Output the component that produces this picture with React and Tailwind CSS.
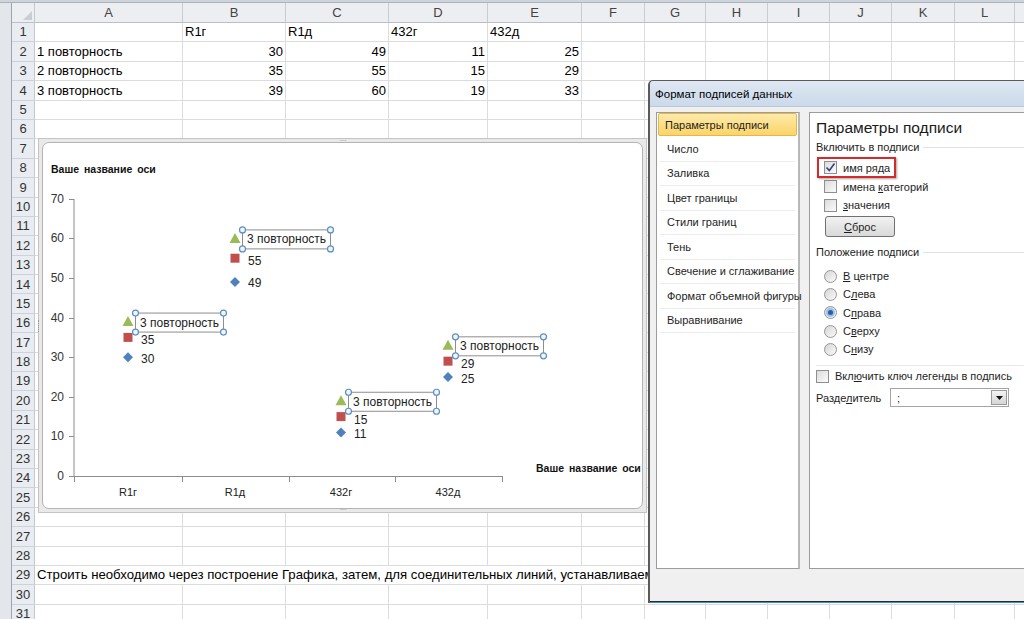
import React from 'react';

const COLS = [
  ['A', 148], ['B', 103], ['C', 103], ['D', 99], ['E', 94], ['F', 63], ['G', 61],
  ['H', 62], ['I', 62], ['J', 62], ['K', 63], ['L', 60], ['M', 40],
];

const DATA = {
  1: [null, { t: 'R1г' }, { t: 'R1д' }, { t: '432г' }, { t: '432д' }],
  2: [{ t: '1 повторность' }, { t: '30', r: 1 }, { t: '49', r: 1 }, { t: '11', r: 1 }, { t: '25', r: 1 }],
  3: [{ t: '2 повторность' }, { t: '35', r: 1 }, { t: '55', r: 1 }, { t: '15', r: 1 }, { t: '29', r: 1 }],
  4: [{ t: '3 повторность' }, { t: '39', r: 1 }, { t: '60', r: 1 }, { t: '19', r: 1 }, { t: '33', r: 1 }],
};

const ROWS = Array.from({ length: 31 }, (_, i) => i + 1);

function Sheet() {
  return (
    <div className="flex flex-col">
      <div className="h-[3px] bg-[#cfd4da] border-b border-[#aab2bc]" />
      <div className="flex">
        <div className="w-[12px] bg-[#e3e7ec] border-r border-[#9aa5b1] flex-shrink-0" />
        <div className="flex flex-col">
          {/* column headers */}
          <div className="flex h-[20px] bg-[#eceef1] border-b border-[#b9c0c9]">
            <div className="w-[23px] flex-shrink-0 border-r border-[#c3c9d1] relative">
              <div className="absolute right-[2px] bottom-[2px] w-0 h-0 border-l-[9px] border-l-transparent border-b-[9px] border-b-[#c9ced5]" />
            </div>
            {COLS.map(([l, w]) => (
              <div key={l} style={{ width: w }} className="flex-shrink-0 border-r border-[#c8cdd4] flex items-center justify-center text-[13px] text-[#444]">
                {l}
              </div>
            ))}
          </div>
          {ROWS.map((r) => (
            <div key={r} className="flex h-[19.4px] border-b border-[#dadcdd]">
              <div className="w-[23px] flex-shrink-0 bg-[#e9ecf0] border-r border-[#c3c9d1] border-b border-b-[#cdd2d8] -mb-px flex items-center justify-center text-[13px] text-[#333]">
                {r}
              </div>
              {r === 29 ? (
                <div className="flex-1 pl-[2px] flex items-center whitespace-nowrap text-[13.2px] text-black">
                  Строить необходимо через построение Графика, затем, для соединительных линий, устанавливаем тип линии «нет»
                </div>
              ) : (
                COLS.map(([l, w], ci) => {
                  const c = DATA[r] && DATA[r][ci];
                  return (
                    <div key={l} style={{ width: w }} className={`flex-shrink-0 border-r border-[#dadcdd] flex items-center px-[2px] text-[13px] text-black ${c && c.r ? 'justify-end' : ''}`}>
                      {c ? c.t : ''}
                    </div>
                  );
                })
              )}
            </div>
          ))}
        </div>
      </div>
    </div>
  );
}

const yOf = (v) => 475 - v * 3.96;
const CATS = [
  { x: 127, l: 'R1г', v: [30, 35, 39] },
  { x: 234, l: 'R1д', v: [49, 55, 60] },
  { x: 340, l: '432г', v: [11, 15, 19] },
  { x: 447, l: '432д', v: [25, 29, 33] },
];

function Handle({ x, y }) {
  return <circle cx={x} cy={y} r="3" fill="#eef5fb" stroke="#5d8fbf" strokeWidth="1.2" />;
}

function Chart() {
  return (
    <div className="absolute left-[38px] top-[138px] w-[609px] h-[375px] bg-[#e9e9e9] border border-[#c4c4c4] p-[3px]">
      <div className="w-full h-full bg-white border border-[#b4b4b4] rounded-[7px] overflow-hidden">
        <svg width="601" height="365" className="block" style={{ fontFamily: '"Liberation Sans", Arial, sans-serif' }}>
          <g transform="translate(-42,-142)">
            <text x="50" y="172" fontSize="10.5" fontWeight="bold" fill="#111" wordSpacing="2">Ваше название оси</text>
            <text x="535" y="471" fontSize="10.5" fontWeight="bold" fill="#111" wordSpacing="2">Ваше название оси</text>
            <line x1="73" y1="198" x2="73" y2="476" stroke="#8c8c8c" strokeWidth="1" />
            <line x1="73" y1="475.5" x2="501" y2="475.5" stroke="#8c8c8c" strokeWidth="1" />
            {[0, 10, 20, 30, 40, 50, 60, 70].map((v) => (
              <g key={v}>
                <line x1="68" y1={Math.round(yOf(v)) + 0.5} x2="73" y2={Math.round(yOf(v)) + 0.5} stroke="#8c8c8c" />
                <text x="63" y={yOf(v) + 4} fontSize="12" fill="#333" textAnchor="end">{v}</text>
              </g>
            ))}
            {[73, 181, 288, 394, 501].map((x) => (
              <line key={x} x1={x + 0.5} y1="475" x2={x + 0.5} y2="481" stroke="#8c8c8c" />
            ))}
            {CATS.map((c) => {
              const yb = yOf(c.v[0]);
              const yr = yOf(c.v[1]);
              const yg = yOf(c.v[2]);
              const bx = c.x + 7;
              const by = yg - 9;
              return (
                <g key={c.l}>
                  <text x={c.x} y="495" fontSize="11" fill="#222" textAnchor="middle">{c.l}</text>
                  <polygon points={`${c.x},${yb - 5} ${c.x + 5},${yb} ${c.x},${yb + 5} ${c.x - 5},${yb}`} fill="#4f81bd" />
                  <rect x={c.x - 4.5} y={yr - 4.5} width="9" height="9" fill="#c0504d" />
                  <polygon points={`${c.x},${yg - 5.5} ${c.x + 5.5},${yg + 4.5} ${c.x - 5.5},${yg + 4.5}`} fill="#9bbb59" />
                  <text x={c.x + 13} y={yb + 5.5} fontSize="12" fill="#222">{c.v[0]}</text>
                  <text x={c.x + 13} y={yr + 7} fontSize="12" fill="#222">{c.v[1]}</text>
                  <rect x={bx + 0.5} y={by + 0.5} width="88" height="19" fill="white" stroke="#8d8d8d" />
                  <text x={bx + 5} y={by + 14} fontSize="12" fill="#222">3 повторность</text>
                  <Handle x={bx + 0.5} y={by + 0.5} />
                  <Handle x={bx + 88.5} y={by + 0.5} />
                  <Handle x={bx + 0.5} y={by + 19.5} />
                  <Handle x={bx + 88.5} y={by + 19.5} />
                </g>
              );
            })}
          </g>
        </svg>
      </div>
      <div className="absolute left-1/2 -translate-x-1/2 top-[-2px] text-[8px] leading-none text-[#9a9a9a] tracking-[-1px]">····</div>
      <div className="absolute left-1/2 -translate-x-1/2 bottom-[-2px] text-[8px] leading-none text-[#9a9a9a] tracking-[-1px]">····</div>
      <div className="absolute left-[-1px] top-1/2 -translate-y-1/2 w-[2px] h-[12px] border-l border-dotted border-[#9a9a9a]" />
    </div>
  );
}

function Check({ checked }) {
  return (
    <span className="w-[13px] h-[13px] flex-shrink-0 border border-[#8e8f8f] bg-gradient-to-br from-[#dcdcdc] to-[#fbfbfb] flex items-center justify-center">
      {checked && (
        <svg width="11" height="11" viewBox="0 0 11 11">
          <path d="M1.5 5.5 L4.3 8.5 L9.5 1.5" fill="none" stroke="#31457a" strokeWidth="1.6" />
        </svg>
      )}
    </span>
  );
}

function Radio({ on }) {
  return (
    <span className="w-[13px] h-[13px] flex-shrink-0 rounded-full border border-[#959595] bg-gradient-to-br from-[#d5d5d5] to-[#fbfbfb] flex items-center justify-center">
      {on && <span className="w-[5px] h-[5px] rounded-full bg-[#2a5ea8] ring-2 ring-[#9fc1e6]" />}
    </span>
  );
}

function Group({ title }) {
  return (
    <div className="flex items-center gap-[4px] h-[16px]">
      <span className="text-[#222]">{title}</span>
      <span className="flex-1 h-px bg-[#dde3e8]" />
    </div>
  );
}

const NAV = [
  'Параметры подписи', 'Число', 'Заливка', 'Цвет границы', 'Стили границ', 'Тень',
  'Свечение и сглаживание', 'Формат объемной фигуры', 'Выравнивание',
];

function Dialog() {
  return (
    <div className="absolute left-[648px] top-[80px] w-[400px] h-[523px] rounded-tl-[5px] border-l-2 border-t border-[#5a5a5a] bg-[#f0f0f0] flex flex-col text-[11px] leading-[14px] text-[#1e1e1e] whitespace-nowrap" style={{ fontFamily: '"Liberation Sans", Arial, sans-serif' }}>
      <div className="h-[26px] bg-gradient-to-b from-[#dfe8f3] to-[#cbd9ea] rounded-tl-[4px] flex items-center pl-[5px] text-[11.5px] text-black flex-shrink-0 border-b border-[#b9c8da]">
        Формат подписей данных
      </div>
      <div className="flex flex-1 pl-[6px] pt-[5px] pb-[34px] gap-[9px]">
        <div className="w-[144px] bg-white border border-[#9c9c9c] border-r-2 border-r-[#b8b8b8] flex flex-col px-[1px]">
          {NAV.map((n, i) => (
            <div key={n} className={i === 0
              ? 'h-[23px] flex items-center pl-[6px] rounded-[2px] border border-[#e2b84e] bg-gradient-to-b from-[#fdeaa8] to-[#fbd468] mb-[1px]'
              : 'h-[24.5px] flex items-center pl-[7px] mx-[2px] border-b border-[#ececec]'}>
              {n}
            </div>
          ))}
        </div>
        <div className="flex-1 bg-white border border-[#9c9c9c] flex flex-col pl-[6px] pt-[5px]">
          <div className="text-[15.5px] leading-[20px] text-[#1a1a1a]">Параметры подписи</div>
          <div className="mt-px"><Group title="Включить в подписи" /></div>
          <div className="flex flex-col pl-[8px] pt-[3px]">
            <div className="relative flex items-center gap-[6px] h-[19px]">
              <div className="absolute left-[-7px] top-[-1px] w-[79px] h-[21px] border-2 border-[#d42a2a] shadow-[1px_1px_2px_rgba(0,0,0,0.35)]" />
              <Check checked />
              <span>имя ряда</span>
            </div>
            <div className="flex items-center gap-[6px] h-[19px]">
              <Check />
              <span>имена <u>к</u>атегорий</span>
            </div>
            <div className="flex items-center gap-[6px] h-[18px]">
              <Check />
              <span><u>з</u>начения</span>
            </div>
            <div className="mt-[2px] ml-[1px] w-[70px] h-[21px] rounded-[3px] border border-[#707070] bg-gradient-to-b from-[#f2f2f2] to-[#d9d9d9] flex items-center justify-center">
              <span><u>С</u>брос</span>
            </div>
          </div>
          <div className="mt-[7px]"><Group title="Положение подписи" /></div>
          <div className="flex flex-col pl-[8px] pt-[7px]">
            {[
              [<><u>В</u> центре</>, false],
              [<>С<u>л</u>ева</>, false],
              [<>С<u>п</u>рава</>, true],
              [<>С<u>в</u>ерху</>, false],
              [<>С<u>н</u>изу</>, false],
            ].map(([t, on], i) => (
              <div key={i} className="flex items-center gap-[6px] h-[18.3px]">
                <Radio on={on} />
                <span>{t}</span>
              </div>
            ))}
          </div>
          <div className="mt-[7px] mr-[4px] h-px bg-[#e6e9ec]" />
          <div className="flex items-center gap-[6px] h-[20px]">
            <Check />
            <span>Вкл<u>ю</u>чить ключ легенды в подпись</span>
          </div>
          <div className="flex items-center h-[21px] mt-px">
            <span className="w-[74px]">Разде<u>л</u>итель</span>
            <div className="w-[119px] h-[19px] border border-[#a4a4a4] bg-white flex items-center">
              <span className="flex-1 pl-[6px]">;</span>
              <span className="w-[16px] h-[15px] mr-[1px] border border-[#9a9a9a] bg-gradient-to-b from-[#f3f3f3] to-[#d6d6d6] flex items-center justify-center">
                <svg width="7" height="4" viewBox="0 0 7 4"><path d="M0 0 H7 L3.5 4 Z" fill="#111" /></svg>
              </span>
            </div>
          </div>
        </div>
      </div>
      <div className="absolute left-0 right-0 bottom-0 h-[2px] bg-[#3b8fd4] border-t border-[#2a2a2a]" />
    </div>
  );
}

export default function App() {
  return (
    <div className="relative w-[1024px] h-[619px] overflow-hidden bg-white" style={{ fontFamily: '"Liberation Sans", Arial, sans-serif' }}>
      <Sheet />
      <Chart />
      <Dialog />
    </div>
  );
}
